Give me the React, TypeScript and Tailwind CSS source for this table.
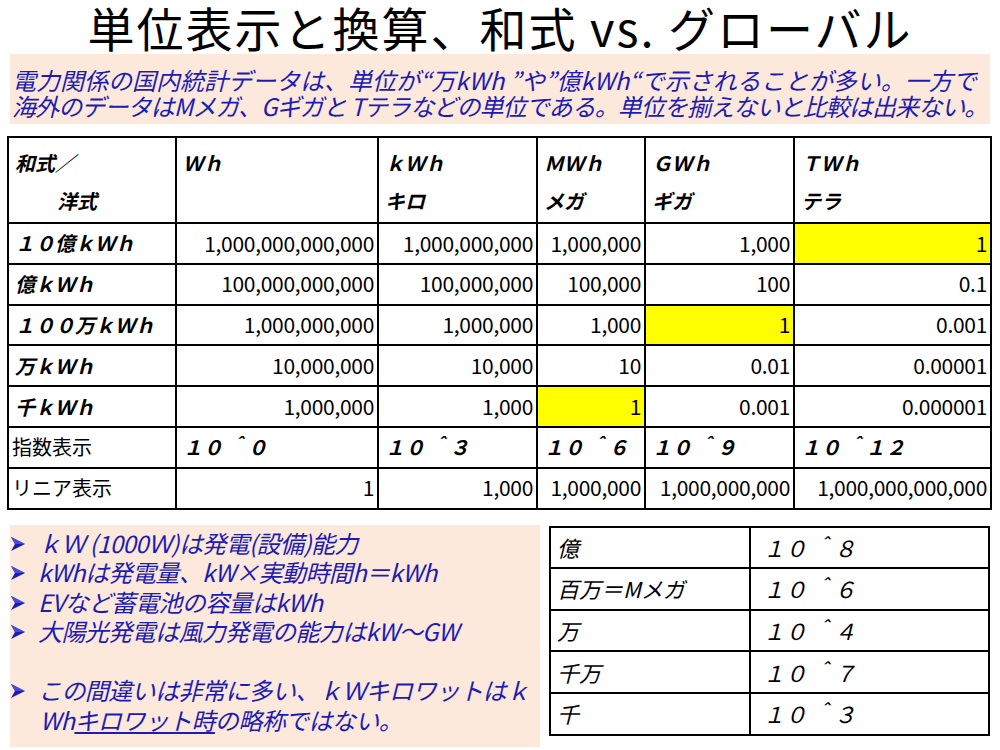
import React from "react";

const F = { fontFamily: '"Noto Sans CJK JP", "Noto Sans", sans-serif' };

const cols = [168, 202, 159, 108, 149, 197];

type Cell = { t: string; kind: "h" | "n" | "p"; y?: boolean };

function HeadCell({ a, b, w, center }: { a: string; b?: string; w: number; center?: boolean }) {
  return (
    <td style={{ width: w }} className="border-2 border-black align-top px-[6px] pt-[6px]">
      <div className="font-bold italic text-[20px] leading-[38px]">{a}</div>
      <div className={`font-bold italic text-[20px] leading-[38px] ${center ? "pl-[42px]" : ""}`}>{b ?? "\u00a0"}</div>
    </td>
  );
}

const rows: Cell[][] = [
  [
    { t: "１０億ｋＷｈ", kind: "h" },
    { t: "1,000,000,000,000", kind: "n" },
    { t: "1,000,000,000", kind: "n" },
    { t: "1,000,000", kind: "n" },
    { t: "1,000", kind: "n" },
    { t: "1", kind: "n", y: true },
  ],
  [
    { t: "億ｋＷｈ", kind: "h" },
    { t: "100,000,000,000", kind: "n" },
    { t: "100,000,000", kind: "n" },
    { t: "100,000", kind: "n" },
    { t: "100", kind: "n" },
    { t: "0.1", kind: "n" },
  ],
  [
    { t: "１００万ｋＷｈ", kind: "h" },
    { t: "1,000,000,000", kind: "n" },
    { t: "1,000,000", kind: "n" },
    { t: "1,000", kind: "n" },
    { t: "1", kind: "n", y: true },
    { t: "0.001", kind: "n" },
  ],
  [
    { t: "万ｋＷｈ", kind: "h" },
    { t: "10,000,000", kind: "n" },
    { t: "10,000", kind: "n" },
    { t: "10", kind: "n" },
    { t: "0.01", kind: "n" },
    { t: "0.00001", kind: "n" },
  ],
  [
    { t: "千ｋＷｈ", kind: "h" },
    { t: "1,000,000", kind: "n" },
    { t: "1,000", kind: "n" },
    { t: "1", kind: "n", y: true },
    { t: "0.001", kind: "n" },
    { t: "0.000001", kind: "n" },
  ],
  [
    { t: "指数表示", kind: "p" },
    { t: "１０ ＾０", kind: "h" },
    { t: "１０ ＾３", kind: "h" },
    { t: "１０ ＾６", kind: "h" },
    { t: "１０ ＾９", kind: "h" },
    { t: "１０ ＾１２", kind: "h" },
  ],
  [
    { t: "リニア表示", kind: "p" },
    { t: "1", kind: "n" },
    { t: "1,000", kind: "n" },
    { t: "1,000,000", kind: "n" },
    { t: "1,000,000,000", kind: "n" },
    { t: "1,000,000,000,000", kind: "n" },
  ],
];

const small = [
  ["億", "１０ ＾８"],
  ["百万＝Mメガ", "１０ ＾６"],
  ["万", "１０ ＾４"],
  ["千万", "１０ ＾７"],
  ["千", "１０ ＾３"],
];

function Arrow() {
  return (
    <svg width="16" height="16" viewBox="0 0 16 16" className="mt-[8px]">
      <path d="M1 1 L15 8 L1 15 L5 8 Z" fill="#1c1cb4" />
      <path d="M1 1 L15 8 L5 8 Z" fill="#4a4ad8" />
    </svg>
  );
}

function Bullet({ children }: { children: React.ReactNode }) {
  return (
    <div className="flex items-start h-[29.5px]">
      <span className="w-[28px] shrink-0 flex">
        <Arrow />
      </span>
      <span className="whitespace-nowrap">{children}</span>
    </div>
  );
}

export default function App() {
  return (
    <div style={F} className="w-[1000px] h-[750px] bg-white text-black overflow-hidden relative">
      <div className="h-[54px] flex items-center justify-center">
        <h1 className="text-[47px] leading-[54px] tracking-[2px] whitespace-nowrap">単位表示と換算、和式 vs. グローバル</h1>
      </div>
      <div className="mx-[10px] h-[70px] bg-[#fce9dc] text-[#1c1cb4] italic text-[24px] leading-[26px] pl-[2px] pt-[13px] whitespace-nowrap">
        <div className="tracking-[0px]">電力関係の国内統計データは、単位が“万kWh ”や”億kWh“で示されることが多い。一方で</div>
        <div className="tracking-[-0.9px]">海外のデータはMメガ、Gギガと Tテラなどの単位である。単位を揃えないと比較は出来ない。</div>
      </div>
      <div className="pl-[7px] pt-[12px]">
        <table className="border-collapse border-2 border-black table-fixed" style={{ width: 983 }}>
          <tbody>
            <tr className="h-[86px]">
              <HeadCell a="和式／" b="洋式" w={cols[0]} center />
              <HeadCell a="Ｗｈ" w={cols[1]} />
              <HeadCell a="ｋＷｈ" b="キロ" w={cols[2]} />
              <HeadCell a="ＭＷｈ" b="メガ" w={cols[3]} />
              <HeadCell a="ＧＷｈ" b="ギガ" w={cols[4]} />
              <HeadCell a="ＴＷｈ" b="テラ" w={cols[5]} />
            </tr>
            {rows.map((r, i) => (
              <tr key={i} className="h-[40.8px]">
                {r.map((c, j) => (
                  <td
                    key={j}
                    style={{ width: cols[j] }}
                    className={`border-2 border-black px-[3px] whitespace-nowrap ${c.y ? "bg-[#ffff00]" : ""} ${
                      c.kind === "n"
                        ? "text-right text-[21px] tracking-[-0.3px]"
                        : c.kind === "h"
                        ? "text-left font-bold italic text-[20px] pl-[6px]"
                        : "text-left text-[20px]"
                    }`}
                  >
                    {c.t}
                  </td>
                ))}
              </tr>
            ))}
          </tbody>
        </table>
      </div>
      <div className="flex mt-[15px]">
        <div className="ml-[10px] w-[530px] h-[222px] bg-[#fce9dc] text-[#1c1cb4] italic text-[24px] leading-[29.5px] pt-[3px] tracking-[-0.6px]">
          <Bullet>ｋＷ (1000Ｗ)は発電(設備)能力</Bullet>
          <Bullet>kWhは発電量、kW×実動時間h＝kWh</Bullet>
          <Bullet>EVなど蓄電池の容量はkWh</Bullet>
          <Bullet>大陽光発電は風力発電の能力はkW～GW</Bullet>
          <div className="h-[29.5px]" />
          <Bullet>この間違いは非常に多い、ｋＷキロワットはｋ</Bullet>
          <div className="pl-[30px] whitespace-nowrap">
            Wh<span className="underline">キロワット時</span>の略称ではない。
          </div>
        </div>
        <div className="ml-[9px] pt-[1px]">
          <table className="border-collapse border-2 border-black table-fixed" style={{ width: 441 }}>
            <tbody>
              {small.map((r, i) => (
                <tr key={i} className="h-[41.6px]">
                  <td style={{ width: 200 }} className="border-2 border-black italic text-[22px] pl-[6px] whitespace-nowrap">
                    {r[0]}
                  </td>
                  <td className="border-2 border-black italic text-[22px] pl-[12px] whitespace-nowrap">{r[1]}</td>
                </tr>
              ))}
            </tbody>
          </table>
        </div>
      </div>
    </div>
  );
}
